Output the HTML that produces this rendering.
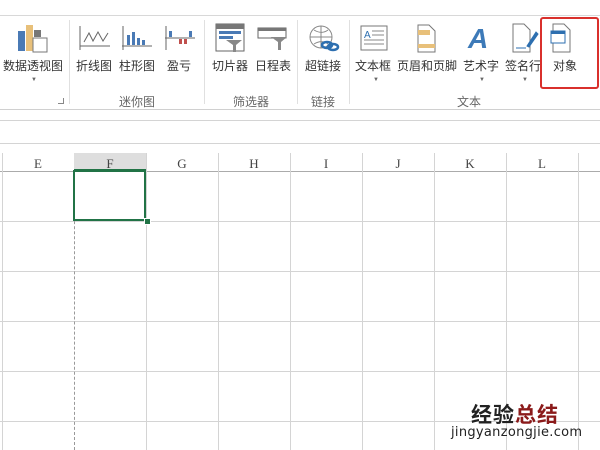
<!DOCTYPE html>
<html><head><meta charset="utf-8"><style>
body{margin:0;width:600px;height:450px;overflow:hidden;background:#fff;font-family:"Liberation Sans","Noto Sans CJK SC",sans-serif;position:relative}
.a{position:absolute}
.lbl{position:absolute;font-size:12px;color:#333;white-space:nowrap;text-align:center}
.grp{position:absolute;font-size:12px;color:#666;top:93px}
.vl{position:absolute;width:1px;background:#d4d4d4}
.hl{position:absolute;height:1px;background:#d4d4d4;left:0;width:600px}
.col{position:absolute;top:156px;font-family:"Liberation Serif",serif;font-size:13px;color:#444;width:72px;text-align:center}
.tri{position:absolute;font-size:6px;color:#666}
</style></head><body>
<div class="hl" style="top:15px;background:#d8d8d8"></div>
<div class="hl" style="top:109px;background:#d0d0d0"></div>
<div class="hl" style="top:120px;background:#d4d4d4"></div>
<div class="hl" style="top:143px;background:#d4d4d4"></div>
<div class="vl" style="left:69px;top:20px;height:84px;background:#e0e0e0"></div>
<div class="vl" style="left:204px;top:20px;height:84px;background:#e0e0e0"></div>
<div class="vl" style="left:297px;top:20px;height:84px;background:#e0e0e0"></div>
<div class="vl" style="left:349px;top:20px;height:84px;background:#e0e0e0"></div>
<svg class="a" style="left:0;top:0" width="600" height="60">
<rect x="18" y="31" width="7" height="20" fill="#4a7ab5"/><rect x="26" y="25" width="7" height="26" fill="#e8c07a"/><rect x="34" y="30" width="7" height="7" fill="#777"/><rect x="33" y="38" width="14" height="14" fill="#fff" stroke="#777"/>
<path d="M80 26v24M80 46h30M84 42l5-9 4 8 5-9 5 9 5-8" stroke="#666" fill="none"/>
<path d="M123 26v24M122 46h30" stroke="#666" fill="none"/><rect x="127" y="35" width="3" height="10" fill="#4a7ab5"/><rect x="132" y="32" width="3" height="13" fill="#4a7ab5"/><rect x="137" y="38" width="3" height="7" fill="#4a7ab5"/><rect x="142" y="40" width="3" height="5" fill="#4a7ab5"/>
<path d="M166 26v24M165 38h30" stroke="#666" fill="none"/><rect x="169" y="31" width="3" height="6" fill="#4a7ab5"/><rect x="179" y="39" width="3" height="5" fill="#c0504d"/><rect x="184" y="39" width="3" height="5" fill="#c0504d"/><rect x="189" y="31" width="3" height="6" fill="#4a7ab5"/>
<rect x="216" y="24" width="28" height="27" fill="#fff" stroke="#666"/><rect x="216" y="24" width="28" height="5" fill="#777"/><rect x="219" y="31" width="22" height="3" fill="#4a7ab5"/><rect x="219" y="36" width="14" height="3" fill="#4a7ab5"/><path d="M226 40h16l-6 5v7h-3v-7z" fill="#888"/>
<rect x="258" y="28" width="28" height="10" fill="#fff" stroke="#666"/><rect x="258" y="28" width="28" height="3" fill="#777"/><path d="M271 37h16l-6 5v8h-3v-8z" fill="#888"/>
<circle cx="321" cy="37" r="11" fill="none" stroke="#888"/><path d="M310 37h22M321 26v22M314 30c5 3 10 3 14 0M314 44c5-3 10-3 14 0" stroke="#888" fill="none"/><ellipse cx="327" cy="45" rx="5" ry="3" fill="none" stroke="#2d6fb0" stroke-width="2.5"/><ellipse cx="333" cy="47" rx="5" ry="3" fill="none" stroke="#2d6fb0" stroke-width="2.5"/>
<rect x="361" y="26" width="26" height="24" fill="#fff" stroke="#777"/><text x="364" y="38" font-size="10" fill="#2d6fb0" font-family="Liberation Sans">A</text><path d="M372 31h12M372 35h12M364 40h20M364 44h20" stroke="#888"/>
<path d="M418 25h11l6 6v21h-17z" fill="#fff" stroke="#777"/><rect x="418" y="30" width="12" height="5" fill="#e8c07a"/><rect x="418" y="44" width="17" height="4" fill="#e8c07a"/>
<text x="468" y="48" font-size="28" font-style="italic" font-weight="bold" fill="#3d7ab8" font-family="Liberation Sans">A</text>
<path d="M513 24h11l6 6v22h-17z" fill="#fff" stroke="#777"/><path d="M516 48h10M527 46l9-14 2 2-9 13z" stroke="#2d6fb0" fill="#2d6fb0" stroke-width="1"/>
<path d="M553 24h11l6 6v22h-17z" fill="#fff" stroke="#777"/><rect x="551" y="31" width="14" height="12" fill="#fff" stroke="#2d6fb0"/><rect x="551" y="31" width="14" height="3" fill="#2d6fb0"/>
</svg>
<div class="lbl" style="left:0;top:57px;width:66px">数据透视图</div>
<div class="tri" style="left:31px;top:77px">▼</div>
<div class="lbl" style="left:76px;top:57px">折线图</div>
<div class="lbl" style="left:119px;top:57px">柱形图</div>
<div class="lbl" style="left:167px;top:57px">盈亏</div>
<div class="lbl" style="left:212px;top:57px">切片器</div>
<div class="lbl" style="left:255px;top:57px">日程表</div>
<div class="lbl" style="left:305px;top:57px">超链接</div>
<div class="lbl" style="left:355px;top:57px">文本框</div>
<div class="lbl" style="left:397px;top:57px">页眉和页脚</div>
<div class="lbl" style="left:463px;top:57px">艺术字</div>
<div class="lbl" style="left:505px;top:57px">签名行</div>
<div class="lbl" style="left:553px;top:57px">对象</div>
<div class="tri" style="left:373px;top:77px">▼</div>
<div class="tri" style="left:479px;top:77px">▼</div>
<div class="tri" style="left:522px;top:77px">▼</div>
<div class="grp" style="left:119px">迷你图</div>
<div class="grp" style="left:233px">筛选器</div>
<div class="grp" style="left:311px">链接</div>
<div class="grp" style="left:457px">文本</div>
<div class="a" style="left:58px;top:98px;width:5px;height:5px;border-right:1px solid #888;border-bottom:1px solid #888"></div>
<div class="a" style="left:540px;top:17px;width:55px;height:68px;border:2px solid #d9302c;border-radius:3px"></div>
<div class="a" style="left:74px;top:153px;width:72px;height:18px;background:#dedede;border-bottom:2px solid #217346;box-sizing:border-box"></div>
<div class="hl" style="top:171px;background:#ababab"></div>
<div class="hl" style="top:221px"></div><div class="hl" style="top:271px"></div><div class="hl" style="top:321px"></div><div class="hl" style="top:371px"></div><div class="hl" style="top:421px"></div>
<div class="vl" style="left:2px;top:153px;height:297px"></div>
<div class="vl" style="left:146px;top:153px;height:297px"></div>
<div class="vl" style="left:218px;top:153px;height:297px"></div>
<div class="vl" style="left:290px;top:153px;height:297px"></div>
<div class="vl" style="left:362px;top:153px;height:297px"></div>
<div class="vl" style="left:434px;top:153px;height:297px"></div>
<div class="vl" style="left:506px;top:153px;height:297px"></div>
<div class="vl" style="left:578px;top:153px;height:297px"></div>
<div class="a" style="left:74px;top:171px;height:279px;border-left:1px dashed #999"></div>
<div class="col" style="left:2px">E</div><div class="col" style="left:74px">F</div><div class="col" style="left:146px">G</div><div class="col" style="left:218px">H</div><div class="col" style="left:290px">I</div><div class="col" style="left:362px">J</div><div class="col" style="left:434px">K</div><div class="col" style="left:506px">L</div>
<div class="a" style="left:73px;top:170px;width:73px;height:51px;border:2px solid #217346;box-sizing:border-box"></div>
<div class="a" style="left:144px;top:218px;width:5px;height:5px;background:#217346;border:1px solid #fff"></div>
<div class="a" style="left:471px;top:399px;font-size:21px;font-weight:bold;color:#222;letter-spacing:1px">经验<span style="color:#8b1a1a">总结</span></div>
<div class="a" style="left:451px;top:425px;font-size:13px;color:#222;font-family:'DejaVu Sans',sans-serif;letter-spacing:0.3px">jingyanzongjie.com</div>
</body></html>
